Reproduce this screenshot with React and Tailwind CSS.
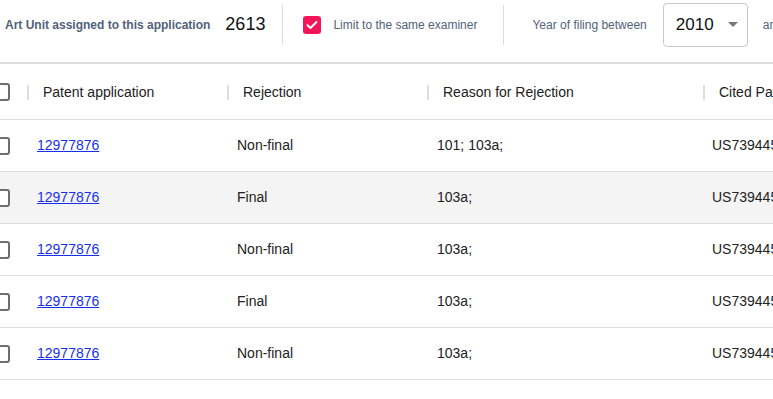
import React from "react";

const rows = [
  { id: "12977876", rej: "Non-final", reason: "101; 103a;", cited: "US7394456B2", bg: "" },
  { id: "12977876", rej: "Final", reason: "103a;", cited: "US7394456B2", bg: "bg-[#f4f4f4]" },
  { id: "12977876", rej: "Non-final", reason: "103a;", cited: "US7394456B2", bg: "" },
  { id: "12977876", rej: "Final", reason: "103a;", cited: "US7394456B2", bg: "" },
  { id: "12977876", rej: "Non-final", reason: "103a;", cited: "US7394456B2", bg: "" },
];

function Box() {
  return <div className="ml-[-8px] h-[18px] w-[18px] shrink-0 rounded-[3px] border-2 border-[#6e6e6e] bg-white" />;
}

function HeadCell({ w, children }) {
  return (
    <div className={`flex shrink-0 items-center ${w}`}>
      <div className="h-[15px] w-[2px] shrink-0 bg-[#dedede]" />
      <span className="ml-[14px] whitespace-nowrap">{children}</span>
    </div>
  );
}

export default function App() {
  return (
    <div className="h-[399px] w-[773px] overflow-hidden bg-white text-[#222]" style={{ fontFamily: '"Liberation Sans", Arial, sans-serif' }}>
      <div className="h-[64px] border-b-2 border-[#dcdcdc]">
        <div className="flex h-[49px] items-center whitespace-nowrap">
          <span className="ml-[5px] shrink-0 text-[12px] font-bold text-[#52627a]">Art Unit assigned to this application</span>
          <span className="ml-[15px] shrink-0 text-[18px] text-[#111]">2613</span>
          <div className="ml-[17px] h-[40px] w-px shrink-0 bg-[#dddddd]" />
          <div className="ml-[20px] flex h-[18px] w-[18px] shrink-0 items-center justify-center rounded-[3px] bg-[#f3155a]">
            <svg width="12" height="10" viewBox="0 0 12 10" fill="none">
              <path d="M1.5 5.2 L4.5 8 L10.5 2" stroke="white" strokeWidth="2" strokeLinecap="round" strokeLinejoin="round" />
            </svg>
          </div>
          <span className="ml-[12px] shrink-0 text-[12px] text-[#52627a]">Limit to the same examiner</span>
          <div className="ml-[26px] h-[40px] w-px shrink-0 bg-[#dddddd]" />
          <span className="ml-[28px] shrink-0 text-[12px] text-[#52627a]">Year of filing between</span>
          <div className="ml-[16px] flex h-[44px] w-[85px] shrink-0 items-center rounded-[4px] border border-[#c8c8c8] pl-[12px]">
            <span className="text-[17px] text-[#111]">2010</span>
            <div className="ml-[14px] h-0 w-0 border-x-[5px] border-t-[5px] border-x-transparent border-t-[#777]" />
          </div>
          <span className="ml-[15px] shrink-0 text-[12px] text-[#52627a]">and</span>
        </div>
      </div>

      <div className="text-[14px]">
        <div className="flex h-[56px] items-center border-b border-[#dcdcdc] pt-[1px]">
          <div className="flex w-[27px] shrink-0 items-center"><Box /></div>
          <HeadCell w="w-[200px]">Patent application</HeadCell>
          <HeadCell w="w-[200px]">Rejection</HeadCell>
          <HeadCell w="w-[276px]">Reason for Rejection</HeadCell>
          <HeadCell w="w-[200px]">Cited Patents</HeadCell>
        </div>
        {rows.map((r, i) => (
          <div key={i} className={`flex h-[52px] items-center border-b border-[#dcdcdc] ${r.bg}`}>
            <div className="flex w-[27px] shrink-0 items-center"><Box /></div>
            <div className="w-[200px] shrink-0 pl-[10px]">
              <a href="#" className="text-[#1530e8] underline">{r.id}</a>
            </div>
            <div className="w-[200px] shrink-0 pl-[10px]">{r.rej}</div>
            <div className="w-[276px] shrink-0 pl-[10px]">{r.reason}</div>
            <div className="w-[200px] shrink-0 pl-[9px] whitespace-nowrap">{r.cited}</div>
          </div>
        ))}
      </div>
    </div>
  );
}
